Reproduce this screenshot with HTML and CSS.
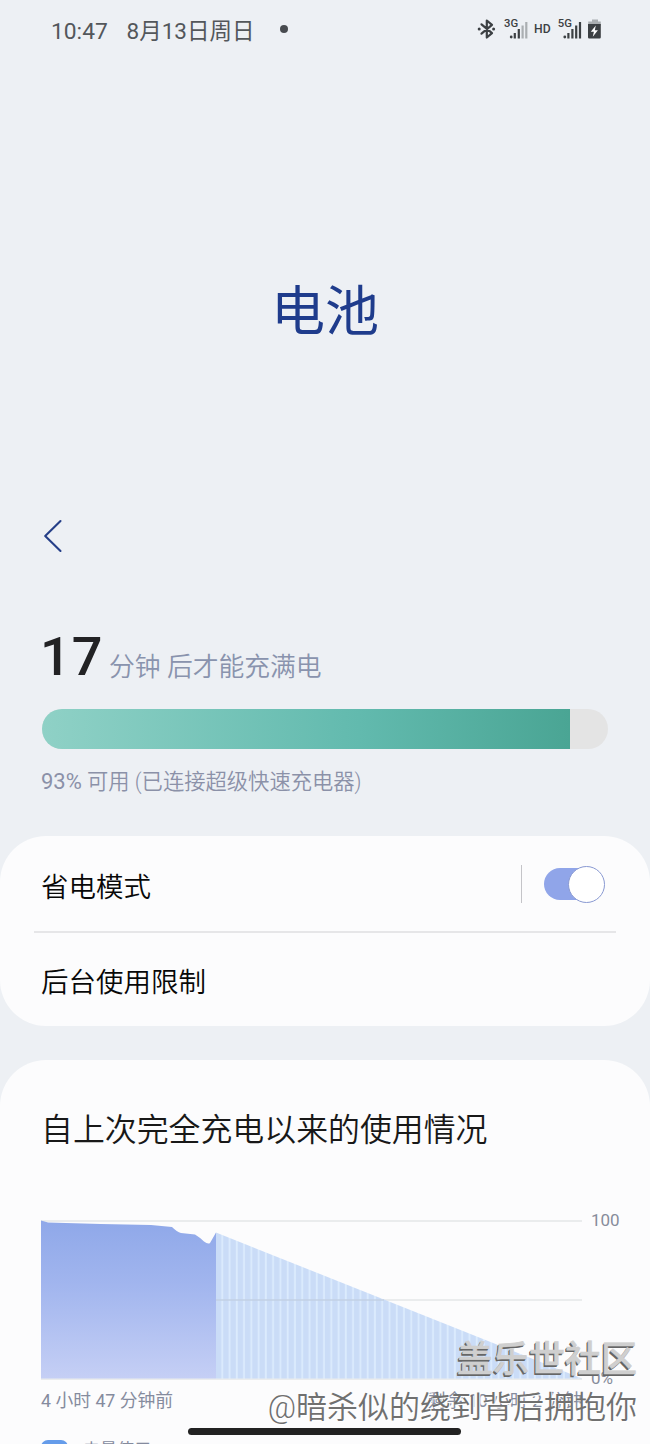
FILE: index.html
```html
<!DOCTYPE html>
<html lang="zh-CN">
<head>
<meta charset="utf-8">
<title>电池</title>
<link rel="stylesheet" href="styles.css">
</head>
<body>
<div class="screen">
  <header class="status">
    <span class="time">10:47</span>
    <span class="date">8月13日周日</span>
    <span class="dot"></span>
    <svg class="indicators" width="126" height="26" viewBox="0 0 126 26">
      <g fill="none" stroke="#3c4043" stroke-width="2.2" stroke-linejoin="round" stroke-linecap="round">
        <path d="M4.5 8.3L15 17.2l-5.2 4.3v-17L15 8.8 4.5 17.7"/>
      </g>
      <g fill="#3c4043"><circle cx="2.2" cy="13" r="1.5"/><circle cx="16.6" cy="13" r="1.5"/>
        <circle cx="34.2" cy="21" r="1.4"/><path d="M36.7 17h2.2v5.4h-2.2zM40.7 13h2.2v9.4h-2.2z"/>
        <circle cx="87.8" cy="21" r="1.4"/><path d="M90.3 17h2.2v5.4h-2.2zM94.3 13h2.2v9.4h-2.2zM98.1 9.5h2.2v12.9h-2.2zM101.9 6h2.2v16.4h-2.2z"/>
      </g>
      <path fill="#aaaeb1" d="M44.5 9.5h2.2v12.9h-2.2zM48.2 6h2.2v16.4h-2.2zM115 3.5h6v2h2.8v4h-12.6V5.5h3.8z"/>
      <path fill="#3c4043" d="M111 8h12.8v13.2q0 1.2-1.2 1.2h-10.4q-1.2 0-1.2-1.2z"/>
      <path fill="#fff" d="M118.8 9.4l-5 6.4h3.1l-1.1 5 5.1-6.6h-3.1z"/>
      <g class="netlabels"><text x="27" y="11" font-size="11.3">3G</text><text x="57" y="17" font-size="12.2">HD</text><text x="80.8" y="11" font-size="11.3">5G</text></g>
    </svg>
  </header>
  <h1 class="title">电池</h1>
  <nav class="toolbar"><svg width="20" height="34" viewBox="0 0 20 34"><path d="M17.5 2L2.2 17l15.3 15" fill="none" stroke="#253f88" stroke-width="2.1" stroke-linecap="round" stroke-linejoin="round"/></svg></nav>
  <section class="charge">
    <div class="remaining"><strong>17</strong><span>分钟 后才能充满电</span></div>
    <div class="meter"><div class="level" style="width:93.2%"></div></div>
    <p class="caption"><span class="percent">93%</span> 可用 (已连接超级快速充电器)</p>
  </section>
  <section class="card options">
    <div class="row"><span class="label">省电模式</span><div class="control"><i class="sep"></i><div class="toggle"><div class="thumb"></div></div></div></div>
    <div class="row last"><span>后台使用限制</span></div>
  </section>
  <section class="card usage">
    <h2>自上次完全充电以来的使用情况</h2>
    <div class="chartrow">
      <svg class="chart" width="542" height="161" viewBox="0 0 542 161">
        <defs>
          <linearGradient id="used" x1="0" y1="0" x2="0" y2="1"><stop offset="0" stop-color="#8fa8e9"/><stop offset=".4" stop-color="#a1b5ee"/><stop offset="1" stop-color="#c5cff5"/></linearGradient>
          <pattern id="stripes" x="175" y="0" width="7.27" height="160" patternUnits="userSpaceOnUse"><rect width="7.27" height="160" fill="#cadcf7"/><rect x="5.3" width="1.9" height="160" fill="#dbebfd"/></pattern>
        </defs>
        <path d="M0 1h541M0 80h541M0 159h541" stroke="#e3e6e8" stroke-width="1.6"/>
        <path d="M175 12.5L541 158.5H175z" fill="url(#stripes)"/>
        <path d="M175 80h168" stroke="#c2d1e5" stroke-width="1.6"/>
        <path d="M0 .5L7 2.5 60 4 110 5 131 7q5 5 9 6l14 1.5q5 3 9 7 4 3 6 1.5L175 12.5v146H0z" fill="url(#used)"/>
      </svg>
      <div class="axis"><span>100</span><span>0%</span></div>
    </div>
    <div class="times"><span>4 小时 47 分钟前</span><span>剩余 10 小时 2 分钟</span></div>
    <div class="legend"><i></i><span>电量使用</span></div>
  </section>
  <div class="home"></div>
  <div class="watermark"><div class="brand">盖乐世社区</div><div class="author">@暗杀似的绕到背后拥抱你</div></div>
</div>
</body>
</html>
```
FILE: styles.css
```css
* { box-sizing: border-box; }
body { margin: 0; background: #edf0f4; font-family: Roboto, "Noto Sans CJK SC", sans-serif; font-weight: 400; overflow: hidden; }
.screen { position: relative; width: 650px; height: 1444px; overflow: hidden; }
.status { height: 62px; padding: 0 47px 0 51px; display: flex; align-items: center; color: #53575b; line-height: 30px; }
.time { font-size: 22.8px; width: 75.5px; padding-top: 1px; }
.date { font-size: 22.5px; width: 153px; white-space: nowrap; }
.dot { width: 8px; height: 8px; border-radius: 50%; background: #484b4f; margin-bottom: 5px; }
.indicators { margin-left: auto; margin-bottom: 4px; }
.netlabels { font-weight: 500; fill: #3c4043; }
.title { margin: 0; height: 440px; padding-top: 213px; text-align: center; font-size: 54px; line-height: 76px; font-weight: 400; color: #1f3c8c; }
.toolbar { height: 115px; padding: 17px 0 0 43px; }
.toolbar svg { display: block; }
.charge { height: 219px; padding: 7px 42px 0 42px; }
.remaining { height: 85px; display: flex; align-items: baseline; line-height: 66px; white-space: nowrap; }
.remaining strong { font-size: 54px; font-weight: 500; letter-spacing: 1px; color: #222224; width: 69px; margin-left: -2px; }
.remaining span { font-size: 25.8px; font-weight: 350; color: #8993ad; position: relative; top: 1px; }
.meter { height: 40px; border-radius: 20px; overflow: hidden; background: #e4e4e4; }
.level { height: 100%; background: linear-gradient(90deg, #8fd1c6, #62baae 60%, #4aa594); }
.caption { margin: 17px 0 0 -1px; font-size: 21.3px; line-height: 32px; font-weight: 350; color: #8b91a8; white-space: nowrap; }
.percent { font-size: 22px; font-weight: 400; }
.card { background: #fcfcfd; }
.options { height: 190px; border-radius: 46px; padding: 0 34px; }
.row { height: 97px; padding: 2px 11px 0 7px; display: flex; align-items: center; justify-content: space-between; font-size: 27.5px; line-height: 40px; font-weight: 350; color: #080808; border-bottom: 2px solid #e6e6e8; }
.label { padding-top: 6px; }
.last { height: 93px; padding-top: 7px; border: 0; }
.control { display: flex; align-items: center; gap: 22px; margin-top: -1px; }
.sep { width: 1px; height: 38px; background: #c4c4c8; }
.toggle { width: 61px; height: 32px; border-radius: 16px; background: linear-gradient(90deg, #90a5e9 48px, transparent 48px); display: flex; align-items: center; justify-content: flex-end; }
.thumb { width: 37px; height: 37px; flex: none; border: 1.5px solid #8999d2; border-radius: 50%; background: #fff; }
.usage { margin-top: 34px; height: 384px; border-radius: 46px 46px 0 0; padding: 46px 0 0 41px; }
h2 { margin: 0; font-size: 31.9px; line-height: 48px; font-weight: 350; color: #181818; white-space: nowrap; }
.chartrow { display: flex; margin-top: 66px; }
.chart { display: block; }
.axis { height: 178px; margin: -10px 0 -7px 8px; display: flex; flex-direction: column; justify-content: space-between; font-size: 17px; line-height: 20px; color: #878c9b; }
.times { margin-top: 6px; display: flex; justify-content: space-between; width: 541px; font-size: 17.8px; line-height: 28px; color: #858b9e; white-space: nowrap; }
.legend { display: flex; align-items: flex-start; gap: 15px; margin-top: 25px; font-size: 17px; line-height: 20px; color: #858b9e; }
.legend i { width: 27px; height: 27px; border-radius: 7px; background: #659cea; }
.home { position: absolute; left: 188px; top: 1428px; width: 273px; height: 7px; border-radius: 4px; background: #222; }
.watermark { position: absolute; right: 13px; top: 1337px; text-align: right; white-space: nowrap; }
.brand { font-size: 36px; line-height: 46px; font-weight: 500; color: #cfcfcf; -webkit-text-stroke: .6px #cfcfcf; text-shadow: -1px 1px 0 #666, -1.5px 2px 0 #666; }
.author { font-size: 31px; line-height: 50px; font-weight: 350; color: #707070; text-shadow: 1px 1px 0 #fff; }
```
